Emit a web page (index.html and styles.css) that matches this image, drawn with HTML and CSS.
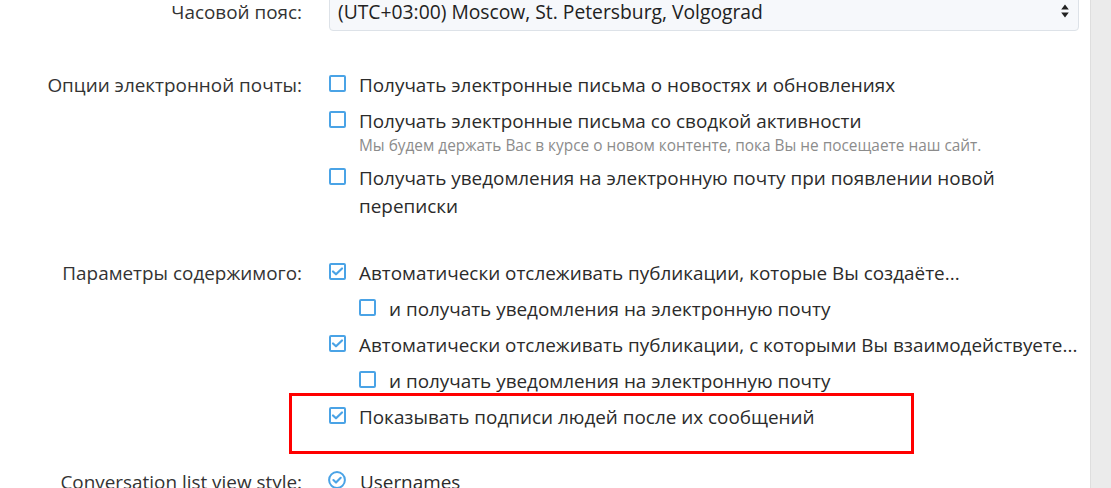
FILE: index.html
```html
<!DOCTYPE html>
<html lang="ru">
<head>
<meta charset="utf-8">
<title>Настройки</title>
<link rel="stylesheet" href="styles.css">
</head>
<body>
<div class="page">
  <main class="content">
    <div class="form">
      <div class="row row-tz">
        <div class="label">Часовой пояс:</div>
        <div class="ctrl">
          <div class="select">
            <span class="select-value">(UTC+03:00) Moscow, St. Petersburg, Volgograd</span>
            <svg class="arrows" width="8" height="14" viewBox="0 0 8 14"><path d="M4 0.5 L7.8 5.5 H0.2 Z M4 13.5 L7.8 8.5 H0.2 Z" fill="#222"/></svg>
          </div>
        </div>
      </div>

      <div class="row">
        <div class="label">Опции электронной почты:</div>
        <ul class="choices">
          <li class="choice"><span class="box"></span><span class="text">Получать электронные письма о новостях и обновлениях</span></li>
          <li class="choice"><span class="box"></span><div class="text">Получать электронные письма со сводкой активности<div class="hint">Мы будем держать Вас в курсе о новом контенте, пока Вы не посещаете наш сайт.</div></div></li>
          <li class="choice"><span class="box"></span><span class="text">Получать уведомления на электронную почту при появлении новой переписки</span></li>
        </ul>
      </div>

      <div class="row row-content">
        <div class="label">Параметры содержимого:</div>
        <ul class="choices">
          <li class="choice"><span class="box checked"><svg viewBox="0 0 17 17"><path d="M4 8.5 L7 11.3 L13 5.5" fill="none" stroke="#4aa3e6" stroke-width="2.2" stroke-linecap="round" stroke-linejoin="round"/></svg></span><span class="text">Автоматически отслеживать публикации, которые Вы создаёте...</span></li>
          <li class="choice sub"><span class="box"></span><span class="text">и получать уведомления на электронную почту</span></li>
          <li class="choice"><span class="box checked"><svg viewBox="0 0 17 17"><path d="M4 8.5 L7 11.3 L13 5.5" fill="none" stroke="#4aa3e6" stroke-width="2.2" stroke-linecap="round" stroke-linejoin="round"/></svg></span><span class="text nowrap">Автоматически отслеживать публикации, с которыми Вы взаимодействуете...</span></li>
          <li class="choice sub"><span class="box"></span><span class="text">и получать уведомления на электронную почту</span></li>
          <li class="choice"><span class="box checked"><svg viewBox="0 0 17 17"><path d="M4 8.5 L7 11.3 L13 5.5" fill="none" stroke="#4aa3e6" stroke-width="2.2" stroke-linecap="round" stroke-linejoin="round"/></svg></span><span class="text">Показывать подписи людей после их сообщений</span></li>
        </ul>
      </div>

      <div class="row">
        <div class="label">Conversation list view style:</div>
        <ul class="choices">
          <li class="choice"><span class="radio"><svg viewBox="0 0 18 18" width="18" height="18"><circle cx="9" cy="9" r="7.9" fill="none" stroke="#4aa3e6" stroke-width="2"/><path d="M5.4 9.1 L8 11.6 L12.7 6.8" fill="none" stroke="#4aa3e6" stroke-width="2.1" stroke-linecap="round" stroke-linejoin="round"/></svg></span><span class="text">Usernames</span></li>
        </ul>
      </div>
    </div>
    <div class="annotation"></div>
  </main>
  <aside class="side"></aside>
</div>
</body>
</html>
```

FILE: styles.css
```css
* { box-sizing: border-box; }
html, body { margin: 0; padding: 0; }
body {
  width: 1111px;
  height: 488px;
  overflow: hidden;
  background: #fff;
  font-family: "Open Sans", "Noto Sans", sans-serif;
  color: #2b2b2b;
}
.page {
  display: flex;
  height: 488px;
}
.content {
  position: relative;
  width: 1090px;
  background: #fff;
  overflow: hidden;
}
.side {
  flex: 1;
  background: #ebebeb;
  border-left: 1px solid #dedede;
}
.form {
  margin-top: -9px;
  padding-right: 11px;
  display: flex;
  flex-direction: column;
  gap: 37px;
}
.row {
  display: grid;
  grid-template-columns: 302px 1fr;
  column-gap: 27px;
  align-items: start;
}
.row-tz {
  align-items: center;
  margin-bottom: 3px;
}
.row-tz .label { line-height: 20px; padding-top: 1px; }
.row-content { margin-top: 2px; }
.label {
  text-align: right;
  font-size: 18.9px;
  line-height: 28px;
  color: #333;
  white-space: nowrap;
}
.select {
  height: 40px;
  display: flex;
  align-items: center;
  justify-content: space-between;
  padding: 0 9px 0 8px;
  background: #f6f8fb;
  border: 1px solid #dde2e8;
  border-radius: 4px;
  font-size: 19.3px;
  color: #222;
}
.select-value { line-height: 20px; padding-top: 1px; }
.choices {
  list-style: none;
  margin: 0 -8px 0 0;
  padding: 0;
  display: flex;
  flex-direction: column;
  gap: 8px;
}
.choice {
  display: flex;
  align-items: flex-start;
  gap: 13px;
  font-size: 18.9px;
  line-height: 28px;
  color: #2b2b2b;
}
.choice .nowrap { white-space: nowrap; }
.choice.sub { padding-left: 30px; }
.box {
  flex: none;
  width: 17px;
  height: 17px;
  margin-top: 4px;
  border: 2px solid #4aa3e6;
  border-radius: 2px;
  position: relative;
}
.box svg {
  position: absolute;
  left: -2px;
  top: -2px;
  width: 17px;
  height: 17px;
}
.radio {
  flex: none;
  width: 18px;
  height: 18px;
  margin-top: 3px;
  margin-left: -1px;
  margin-right: 1px;
}
.radio svg { display: block; }
.hint {
  font-size: 15.4px;
  line-height: 20px;
  color: #8c8c8c;
  margin-top: 1px;
}
.annotation {
  position: absolute;
  left: 289px;
  top: 393px;
  width: 625px;
  height: 61px;
  border: 3px solid #ff0000;
}
```
